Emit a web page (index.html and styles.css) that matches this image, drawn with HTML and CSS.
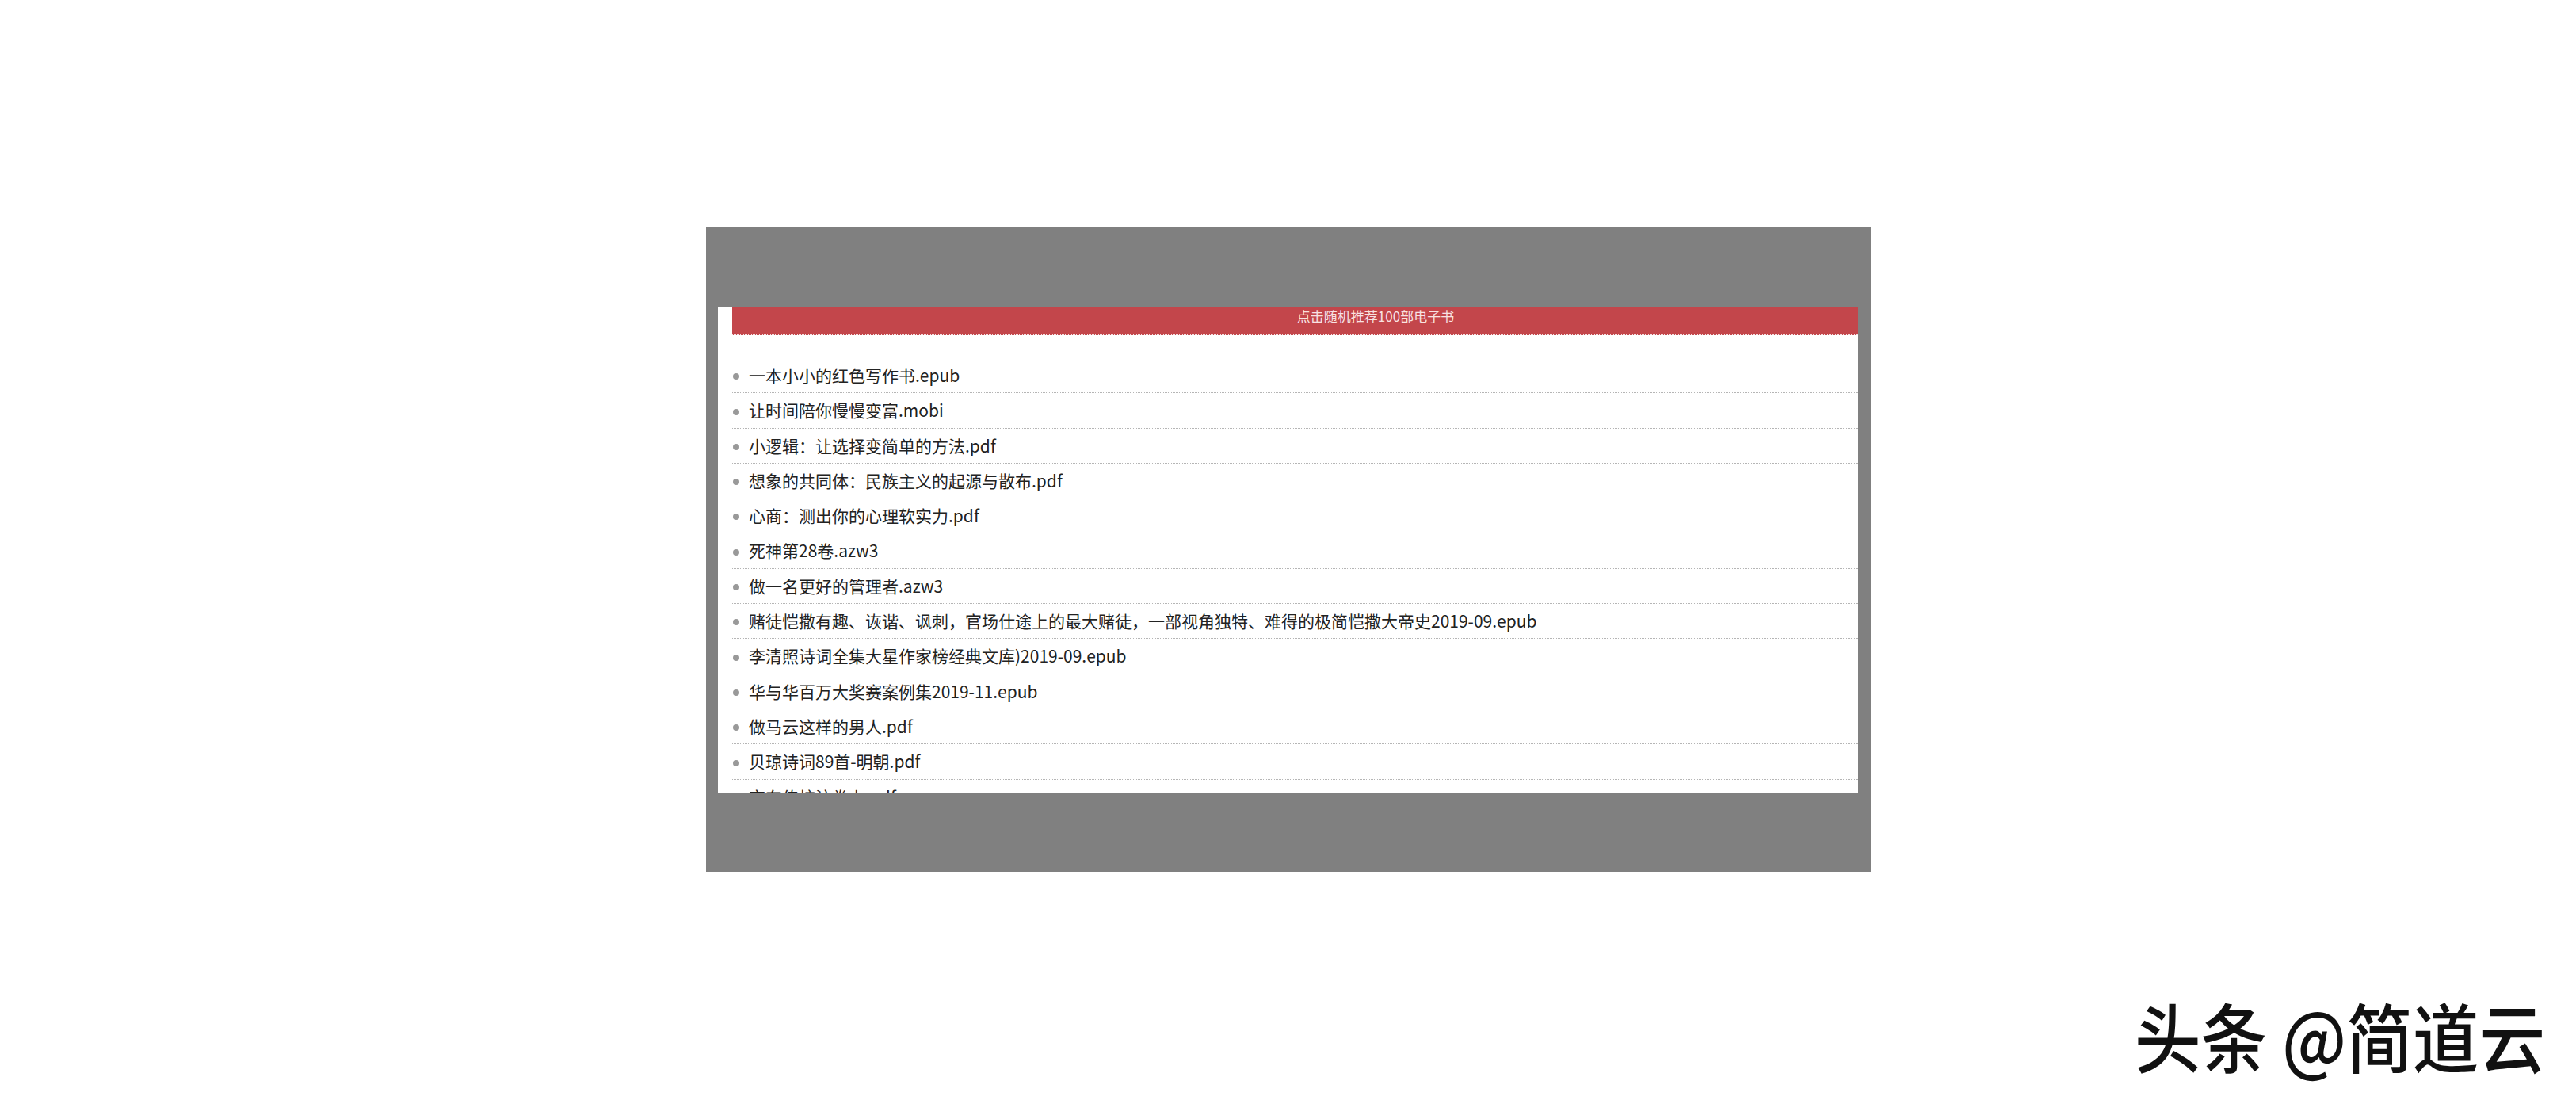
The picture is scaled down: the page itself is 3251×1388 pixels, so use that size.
FILE: index.html
```html
<!DOCTYPE html>
<html lang="zh-CN">
<head>
<meta charset="utf-8">
<title>点击随机推荐100部电子书</title>
<link rel="stylesheet" href="styles.css">
</head>
<body>
<div class="stage">
  <div class="frame">
    <div class="panel">
      <div class="banner">点击随机推荐100部电子书</div>
      <ul class="books">
        <li>一本小小的红色写作书.epub</li>
        <li>让时间陪你慢慢变富.mobi</li>
        <li>小逻辑：让选择变简单的方法.pdf</li>
        <li>想象的共同体：民族主义的起源与散布.pdf</li>
        <li>心商：测出你的心理软实力.pdf</li>
        <li>死神第28卷.azw3</li>
        <li>做一名更好的管理者.azw3</li>
        <li>赌徒恺撒有趣、诙谐、讽刺，官场仕途上的最大赌徒，一部视角独特、难得的极简恺撒大帝史2019-09.epub</li>
        <li>李清照诗词全集大星作家榜经典文库)2019-09.epub</li>
        <li>华与华百万大奖赛案例集2019-11.epub</li>
        <li>做马云这样的男人.pdf</li>
        <li>贝琼诗词89首-明朝.pdf</li>
        <li>京东传校注卷上.pdf</li>
      </ul>
    </div>
  </div>
</div>
<div class="watermark">头条 @简道云</div>
</body>
</html>
```
FILE: styles.css
```css
html, body {
  margin: 0;
  padding: 0;
  background: #ffffff;
}
body {
  width: 3251px;
  height: 1388px;
  position: relative;
  overflow: hidden;
  font-family: "Noto Sans CJK SC", "Noto Sans", sans-serif;
}
.stage {
  padding: 287px 0 0 891px;
}
.frame {
  width: 1470px;
  height: 813px;
  box-sizing: border-box;
  background: #808080;
  padding: 100px 16px 99px 15px;
}
.panel {
  height: 614px;
  background: #ffffff;
  overflow: hidden;
  padding-left: 18px;
}
.banner {
  height: 35px;
  background: #c3464b;
  border-bottom: 1px dotted rgba(255, 255, 255, 0.85);
  color: #f8e2e2;
  font-size: 17px;
  line-height: 24px;
  text-align: center;
  padding-left: 203px;
}
.books {
  list-style: none;
  margin: 29px 0 0 0;
  padding: 0;
}
.books li {
  height: 43.3px;
  line-height: 43.3px;
  border-bottom: 1px dotted #b5b5b5;
  font-size: 21px;
  color: #222222;
  white-space: nowrap;
}
.books li::before {
  content: "";
  display: inline-block;
  width: 8px;
  height: 8px;
  border-radius: 50%;
  background: #999999;
  margin: 0 12px 0 1px;
  vertical-align: middle;
  position: relative;
  top: -1px;
}
.watermark {
  position: absolute;
  left: 2694px;
  top: 1258px;
  font-size: 95px;
  line-height: 1;
  color: #111111;
  font-weight: 500;
  white-space: nowrap;
  transform: scaleX(0.88);
  transform-origin: left top;
}
```
